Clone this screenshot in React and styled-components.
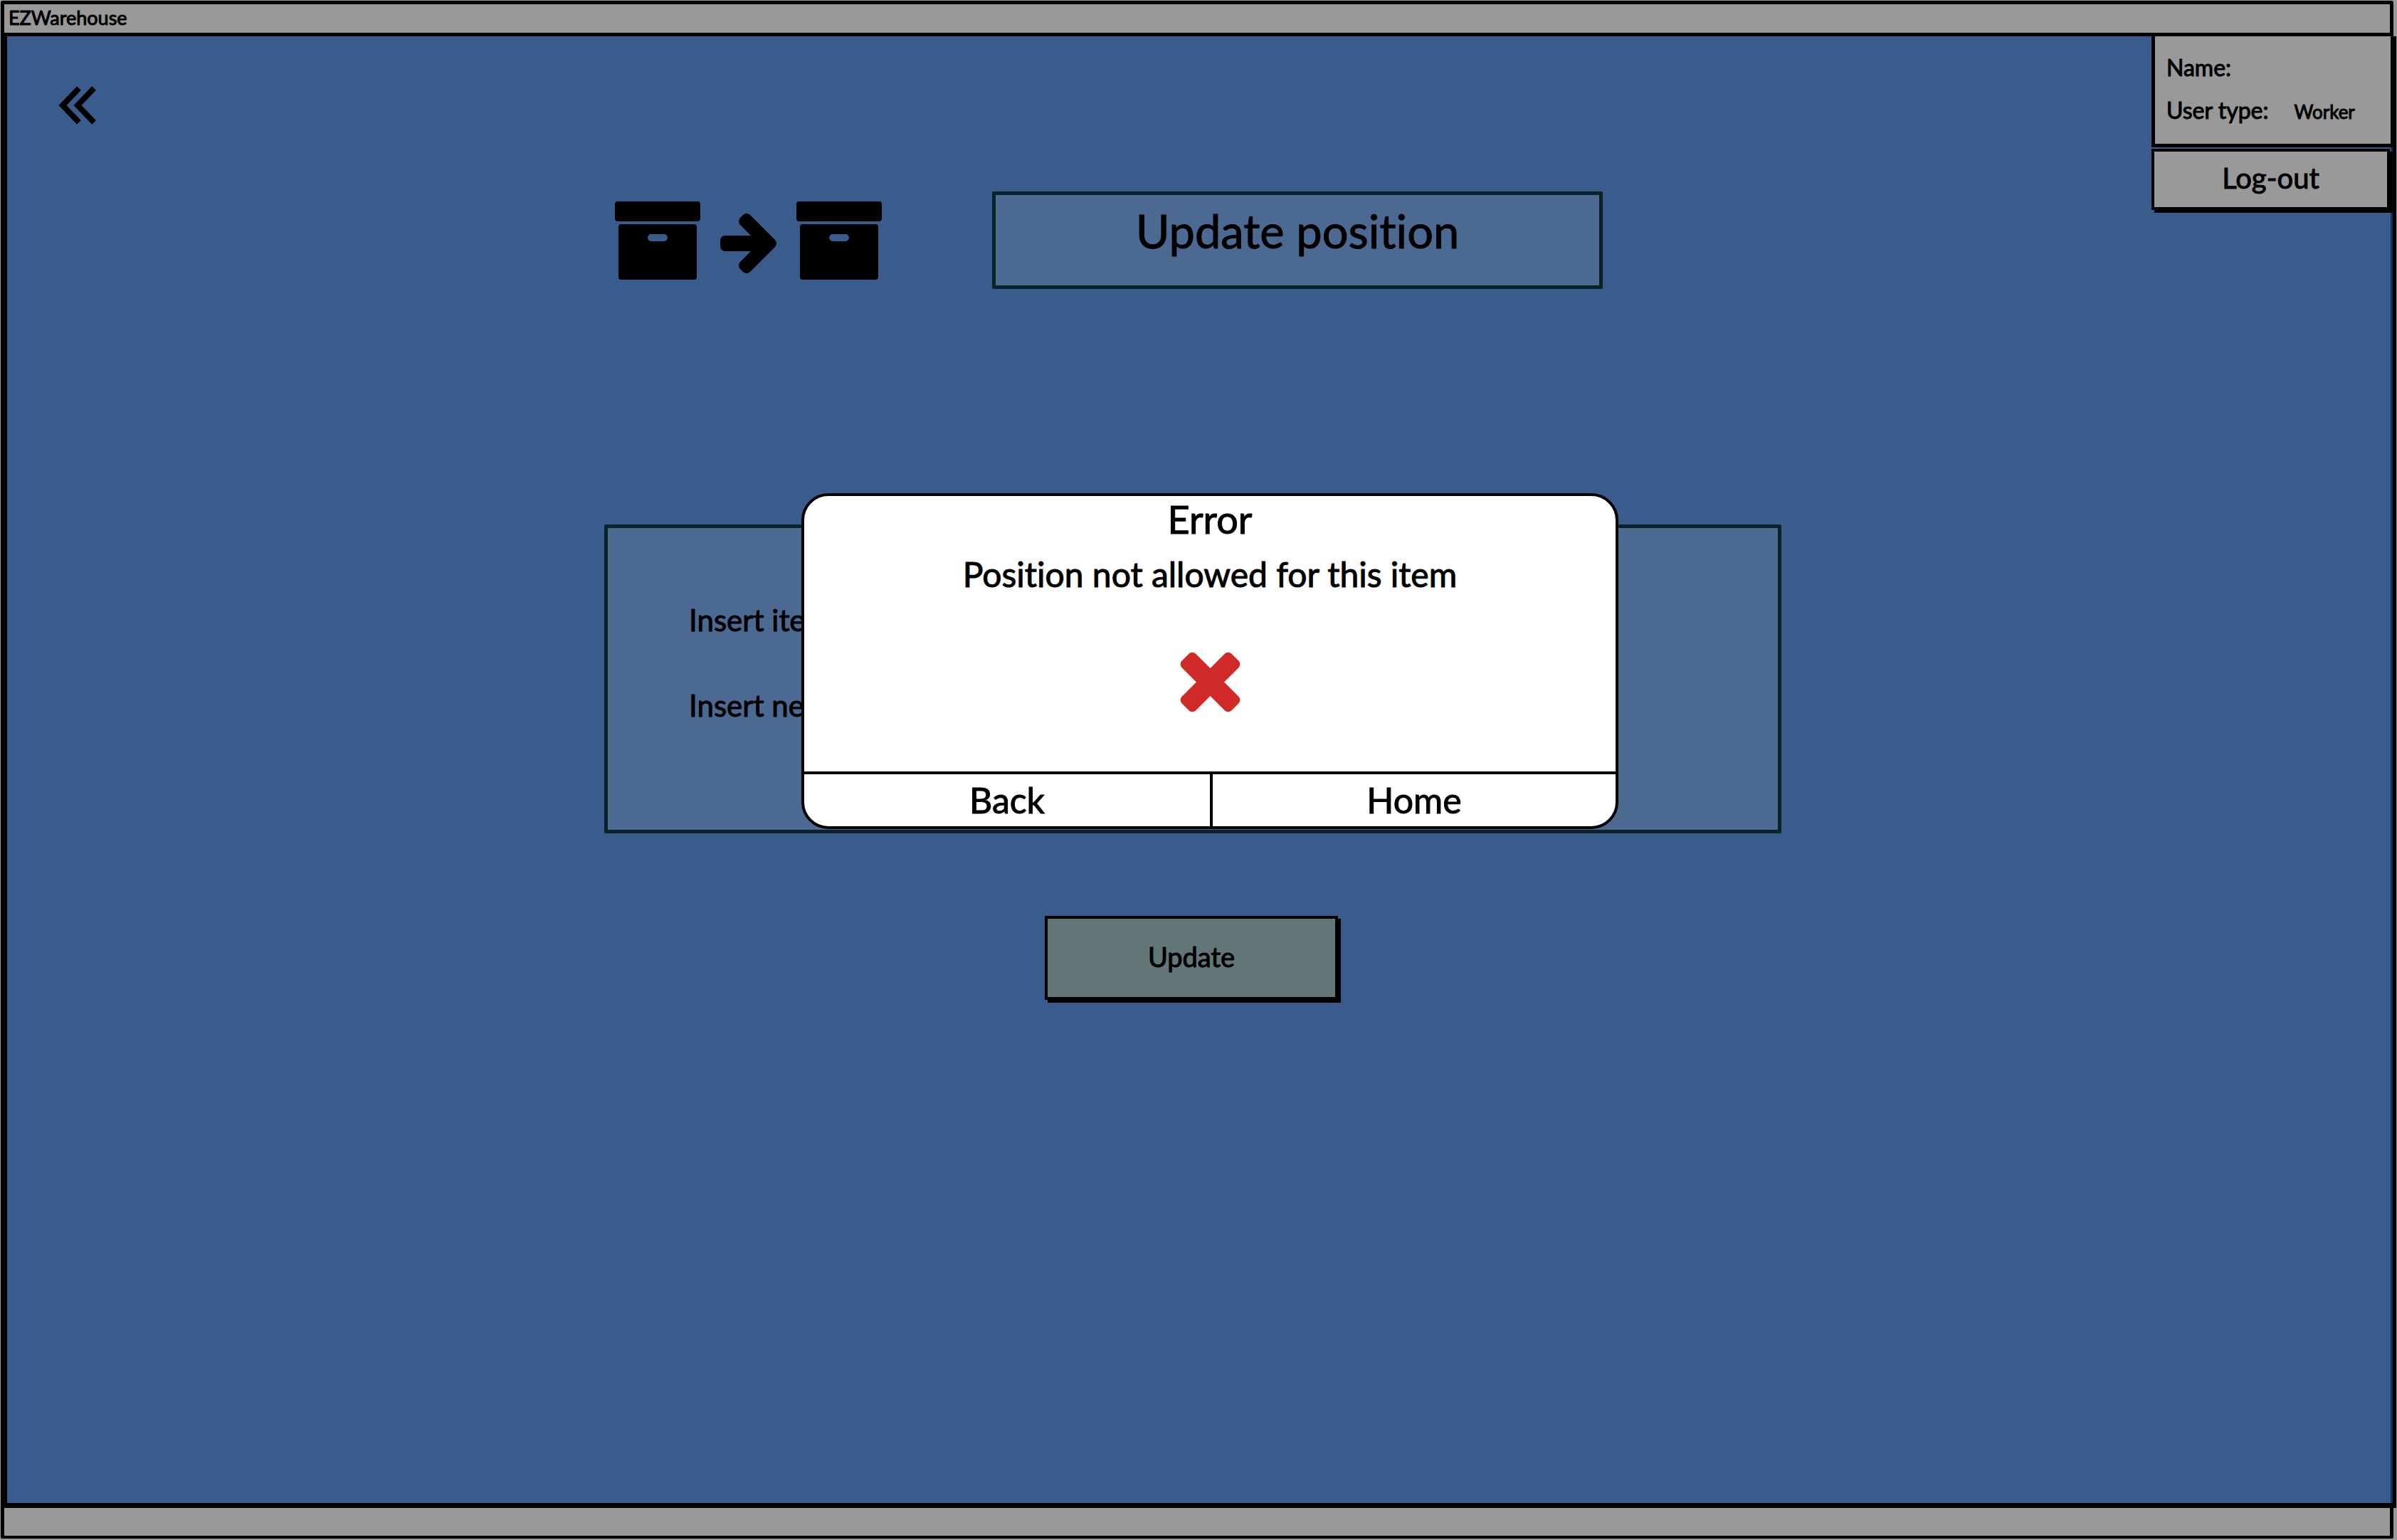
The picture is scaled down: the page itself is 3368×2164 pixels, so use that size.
import React from "react";
import styled, { createGlobalStyle } from "styled-components";

const ink = "#000";
const grey = "#999";

const GlobalStyle = createGlobalStyle`
  *, *::before, *::after { box-sizing: border-box; }
  body {
    margin: 0;
    background: ${grey};
    color: ${ink};
    font-family: Lato, "Open Sans", sans-serif;
    font-variant-ligatures: none;
    -webkit-text-stroke: 1px ${ink};
  }
  h1, h2, p, dl, dd { margin: 0; font-weight: 400; }
  button, input {
    font: inherit;
    font-variant-ligatures: none;
    color: inherit;
    -webkit-text-stroke: inherit;
  }
`;

const Page = styled.div`
  display: grid;
  grid-template-rows: auto 1fr auto;
  min-height: 100vh;
  padding: 1px 1px 2px;
`;

const TitleBar = styled.header`
  margin-right: 4px;
  padding: 0 0 2px 6px;
  border: 5px solid ${ink};
  border-radius: 3px 3px 0 0;
  background: ${grey};
  font-size: 27px;
  line-height: 38px;
`;

const StatusBar = styled.footer`
  height: 43px;
  margin-right: 4px;
  border: solid ${ink};
  border-width: 0 5px 4px;
  border-radius: 0 0 3px 3px;
  background: ${grey};
`;

const Workspace = styled.main`
  position: relative;
  display: grid;
  grid-template-columns: 42fr minmax(0, 1654px) 43fr;
  align-items: start;
  border: solid ${ink};
  border-width: 0 5px 7px 9px;
  background: #3a5c8c;
  box-shadow: inset -3px 0 #14305f;
`;

const BackLink = styled.a`
  justify-self: start;
  display: block;
  margin: 70px 0 0 72px;
  color: inherit;
`;

const Icon = styled.svg`
  display: block;
  flex: none;
  fill: currentColor;
`;

const Stage = styled.section`
  display: flex;
  flex-direction: column;
  padding-top: 218px;
`;

const Heading = styled.div`
  display: flex;
  align-items: center;
  gap: 155px;
  padding-left: 15px;
`;

const Pictogram = styled.div`
  display: flex;
  align-items: flex-end;
  gap: 28px;
`;

const Framed = styled.div`
  border: 5px solid #0a2126;
  border-radius: 2px;
  background: #4c6991;
`;

const Title = styled(Framed).attrs({ as: "h1" })`
  flex: 0 1 858px;
  height: 137px;
  padding-top: 10px;
  font-size: 65px;
  line-height: 80px;
  text-align: center;
`;

const Form = styled.form`
  display: flex;
  flex-direction: column;
  align-items: center;
  gap: 116px;
  margin-top: 331px;
`;

const Fields = styled(Framed)`
  display: flex;
  flex-direction: column;
  gap: 60px;
  width: 100%;
  height: 434px;
  padding: 99px 114px;
`;

const Field = styled.label`
  display: flex;
  align-items: center;
  gap: 40px;
  height: 60px;
  font-size: 42px;
`;

const FieldInput = styled.input`
  width: 480px;
  height: 60px;
  border: 4px solid ${ink};
  background: ${grey};
`;

const SketchButton = styled.button`
  width: ${(p) => p.$width}px;
  height: ${(p) => p.$height}px;
  margin-right: 4px;
  padding: 0 0 4px;
  border: 4px solid ${ink};
  border-radius: 0;
  background: ${(p) => p.$fill};
  box-shadow: 4px 4px ${ink};
  font-size: ${(p) => p.$size}px;
`;

const Account = styled.aside`
  justify-self: end;
  display: flex;
  flex-direction: column;
  gap: 2px;
  width: 339px;
`;

const AccountCard = styled.dl`
  display: flex;
  flex-direction: column;
  gap: 20px;
  height: 156px;
  padding: 24px 16px;
  border: solid ${ink};
  border-width: 0 3px 5px 5px;
  background: ${grey};
  font-size: 32px;
  line-height: 40px;
`;

const AccountRow = styled.div`
  display: flex;
  align-items: baseline;
  gap: 36px;

  dt { white-space: nowrap; }
  dd { font-size: 26px; }
`;

const Overlay = styled.div`
  position: absolute;
  inset: 0;
  display: flex;
  justify-content: center;
  align-items: flex-start;
  padding: 642px 0 0 28px;
`;

const Dialog = styled.div`
  display: flex;
  flex-direction: column;
  align-items: center;
  width: 1148px;
  overflow: hidden;
  border: 4px solid ${ink};
  border-radius: 38px;
  background: #fff;
`;

const DialogTitle = styled.h2`
  font-size: 54px;
  line-height: 66px;
`;

const DialogText = styled.p`
  margin: 14px 0 79px;
  font-size: 48px;
  line-height: 60px;
`;

const DialogActions = styled.div`
  display: grid;
  grid-template-columns: 1fr 1fr;
  width: 100%;
  margin-top: 83px;
  border-top: 4px solid ${ink};
`;

const DialogButton = styled.button`
  height: 73px;
  padding: 0 0 2px;
  border: 0;
  background: none;
  font-size: 50px;

  & + & { border-left: 4px solid ${ink}; }
`;

const BoxIcon = () => (
  <Icon width="120" height="110" viewBox="0 0 120 110" aria-hidden="true">
    <rect width="120" height="28" rx="4" />
    <path
      fillRule="evenodd"
      d="M9 32H111a4 4 0 0 1 4 4V106a4 4 0 0 1-4 4H9a4 4 0 0 1-4-4V36a4 4 0 0 1 4-4ZM51 46a5 5 0 0 0 0 10H69a5 5 0 0 0 0-10Z"
    />
  </Icon>
);

const ArrowIcon = () => (
  <Icon width="79" height="93" viewBox="0 0 79 93" aria-hidden="true">
    <path
      d="M37 7L72 42L37 77L33 73L60 46H7V38H60L33 11Z"
      stroke="currentColor"
      strokeWidth="14"
      strokeLinejoin="round"
    />
  </Icon>
);

const ChevronsIcon = () => (
  <Icon width="53" height="54" viewBox="0 0 53 54" aria-hidden="true">
    <path
      d="M29 3L6 27L29 51M50 3L27 27L50 51"
      fill="none"
      stroke="currentColor"
      strokeWidth="8"
    />
  </Icon>
);

const CrossIcon = () => (
  <Icon width="85" height="85" viewBox="-43 -43 86 86" aria-hidden="true">
    <g fill="#d02a28">
      <rect x="-50" y="-14" width="100" height="28" rx="7" transform="rotate(45)" />
      <rect x="-50" y="-14" width="100" height="28" rx="7" transform="rotate(-45)" />
    </g>
  </Icon>
);

export default function App() {
  return (
    <>
      <GlobalStyle />
      <Page>
        <TitleBar>EZWarehouse</TitleBar>
        <Workspace>
          <BackLink href="#back" aria-label="Back">
            <ChevronsIcon />
          </BackLink>
          <Stage>
            <Heading>
              <Pictogram>
                <BoxIcon />
                <ArrowIcon />
                <BoxIcon />
              </Pictogram>
              <Title>Update position</Title>
            </Heading>
            <Form onSubmit={(e) => e.preventDefault()}>
              <Fields>
                <Field>
                  Insert item
                  <FieldInput type="text" />
                </Field>
                <Field>
                  Insert new position
                  <FieldInput type="text" />
                </Field>
              </Fields>
              <SketchButton type="submit" $width={412} $height={118} $size={38} $fill="#627678">
                Update
              </SketchButton>
            </Form>
          </Stage>
          <Account>
            <AccountCard>
              <AccountRow>
                <dt>Name:</dt>
                <dd />
              </AccountRow>
              <AccountRow>
                <dt>User type:</dt>
                <dd>Worker</dd>
              </AccountRow>
            </AccountCard>
            <SketchButton type="button" $width={335} $height={86} $size={40} $fill={grey}>
              Log-out
            </SketchButton>
          </Account>
          <Overlay>
            <Dialog role="alertdialog" aria-labelledby="error-title" aria-describedby="error-text">
              <DialogTitle id="error-title">Error</DialogTitle>
              <DialogText id="error-text">Position not allowed for this item</DialogText>
              <CrossIcon />
              <DialogActions>
                <DialogButton type="button">Back</DialogButton>
                <DialogButton type="button">Home</DialogButton>
              </DialogActions>
            </Dialog>
          </Overlay>
        </Workspace>
        <StatusBar />
      </Page>
    </>
  );
}
